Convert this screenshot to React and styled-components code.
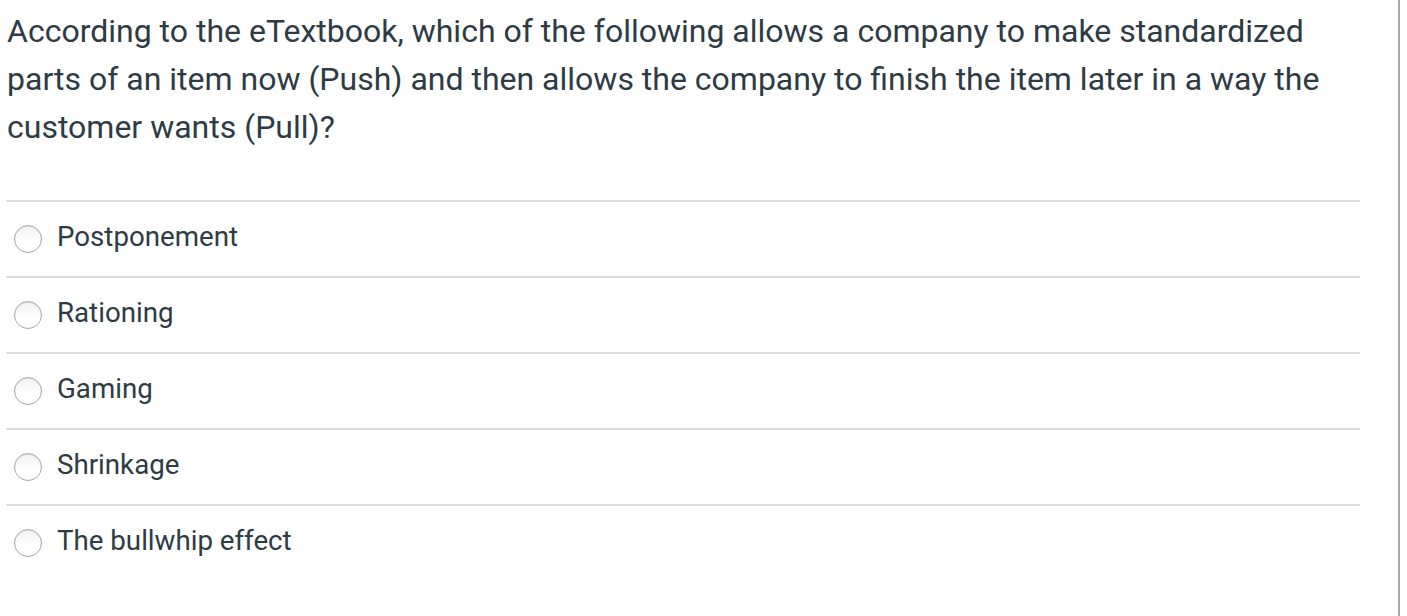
import styled, { createGlobalStyle } from 'styled-components'

const GlobalStyle = createGlobalStyle`
  html, body {
    margin: 0;
    padding: 0;
    background: #ffffff;
  }
  body {
    font-family: Roboto, 'Liberation Sans', Arial, sans-serif;
    color: #2d3b45;
  }
`

const options = [
  'Postponement',
  'Rationing',
  'Gaming',
  'Shrinkage',
  'The bullwhip effect',
]

const App = () => {
  return (
    <>
      <GlobalStyle />
      <Page>
        <Question>
          <QuestionText>
            According to the eTextbook, which of the following allows a company
            to make standardized parts of an item now (Push) and then allows the
            company to finish the item later in a way the customer wants (Pull)?
          </QuestionText>
          <Answers>
            {options.map((item, index) => {
              return (
                <Answer key={index}>
                  <Radio type='radio' name='answer' />
                  <AnswerLabel>{item}</AnswerLabel>
                </Answer>
              )
            })}
          </Answers>
        </Question>
      </Page>
    </>
  )
}

const Page = styled.div`
  width: 1400px;
  height: 616px;
  border-right: 2px solid #a9a9a9;
  box-sizing: border-box;
  background: #ffffff;
`

const Question = styled.div`
  width: 1354px;
  padding-left: 6px;
  padding-top: 7px;
`

const QuestionText = styled.div`
  font-size: 32px;
  line-height: 48px;
  padding-left: 1px;
  margin-bottom: 49px;
`

const Answers = styled.div`
  display: flex;
  flex-direction: column;
`

const Answer = styled.label`
  display: flex;
  align-items: center;
  height: 76px;
  box-sizing: border-box;
  border-top: 2px solid #dcdcdc;
  padding-left: 8px;
  gap: 15px;
`

const Radio = styled.input`
  appearance: none;
  margin: 0;
  width: 28px;
  height: 28px;
  border-radius: 50%;
  border: 1px solid #a8a8a8;
  box-sizing: border-box;
  background: linear-gradient(to bottom, #f2f2f2, #ffffff 60%);
  box-shadow: inset 0 1px 2px rgba(0, 0, 0, 0.08);
`

const AnswerLabel = styled.span`
  font-size: 27.7px;
  line-height: 32px;
  padding-bottom: 4px;
`

export default App
